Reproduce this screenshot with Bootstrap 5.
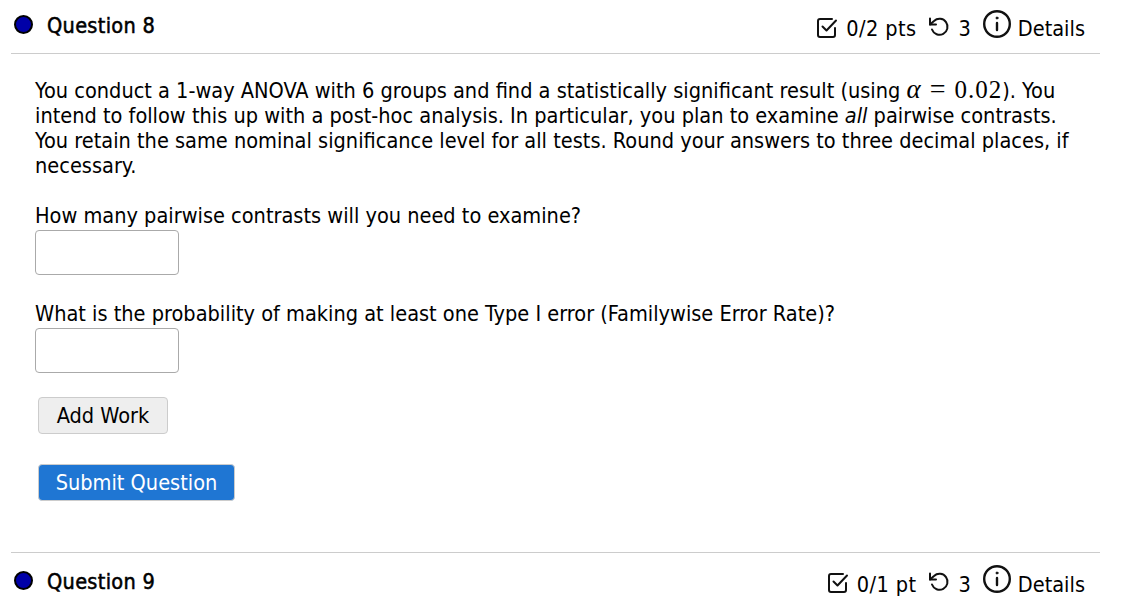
<!DOCTYPE html>
<html lang="en">
<head>
    <meta charset="UTF-8">
    <meta name="viewport" content="width=device-width, initial-scale=1.0">
    <title>Question 8</title>
    <link href="https://cdn.jsdelivr.net/npm/bootstrap@5.3.3/dist/css/bootstrap.min.css" rel="stylesheet">
    <style>
        body {
            font-family: "DejaVu Sans", sans-serif;
            font-stretch: condensed;
            font-size: 21.55px;
            line-height: 25px;
            color: #000;
            background: #fff;
            overflow: hidden;
        }
        .pagina { width: 1100px; padding-left: 11px; }
        .cabecalho { height: 54px; border-bottom: 1px solid #ccc; }
        .cabecalho-fim { height: 54px; margin-top: 2px; }
        .bolinha {
            width: 19px; height: 19px; border-radius: 50%;
            background: #0000a8; border: 2px solid #000;
            margin-left: 3px; margin-right: 14px;
        }
        .titulo-questao { -webkit-text-stroke: 0.5px #000; letter-spacing: 0.3px; padding-top: 2px; }
        .cabecalho-esq { height: 100%; padding-bottom: 4px; }
        .info-questao { padding-right: 15px; height: 100%; }
        .texto-info { padding-top: 4px; margin-left: 8px; }
        .texto-pontos { letter-spacing: 0.4px; }
        .icone-info { margin-top: 2px; margin-left: 12px; }
        .icone-detalhes { margin-bottom: 6px; margin-left: 11px; margin-right: -2px; }
        .corpo { padding: 24px 24px 0; width: 1089px; }
        .corpo p { margin: 0 0 25px; }
        .caixa-resposta {
            display: block; width: 144px; height: 45px; margin-top: 2px;
            border: 1px solid #aaa; border-radius: 4px; background: #fff;
        }
        .bloco-pergunta { margin-bottom: 26px; }
        .bloco-pergunta + .botao-add { margin-top: -2px; }
        .botao-add, .botao-enviar {
            font-size: 21.55px; font-stretch: condensed; line-height: 25px; border-radius: 4px; padding: 0;
            margin-left: 3px; display: block;
        }
        .botao-add { width: 130px; height: 37px; background: #eee; border: 1px solid #ccc; color: #000; }
        .botao-enviar { width: 197px; height: 37px; background: #1f76d3; border: 1px solid #ccc; color: #fff; margin-top: 30px; }
        .formula { font-family: "Liberation Serif", serif; font-size: 25px; line-height: 0; font-stretch: normal; }
        .formula i { font-size: 27px; margin-right: 9px; }
        .formula b { font-weight: 400; font-size: 28px; margin-right: 9px; }
        .formula span { letter-spacing: 1px; }
        .divisor { border-top: 1px solid #ccc; margin-top: 51px; }
    </style>
</head>
<body>
    <div class="pagina">
        <div class="cabecalho d-flex justify-content-between align-items-center">
            <div class="cabecalho-esq d-flex align-items-center">
                <span class="bolinha"></span>
                <span class="titulo-questao">Question 8</span>
            </div>
            <div class="info-questao d-flex align-items-center">
                <svg class="icone-info" width="22" height="22" viewBox="0 0 22 22" fill="none" stroke="#111" stroke-width="2" stroke-linecap="round" stroke-linejoin="round"><path d="M19 11v7a2 2 0 0 1-2 2H4a2 2 0 0 1-2-2V4a2 2 0 0 1 2-2h12"/><path d="M6.5 9.5l4 4 9.5-10"/></svg>
                <span class="texto-info texto-pontos">0/2 pts</span>
                <svg class="icone-info" width="22" height="22" viewBox="0 0 22 22" fill="none" stroke="#111" stroke-width="2" stroke-linecap="round" stroke-linejoin="round"><path d="M4 12.5a8 8 0 1 0 2-8.5L2 7.5"/><path d="M2 1.5v6h6"/></svg>
                <span class="texto-info">3</span>
                <svg class="icone-detalhes" width="30" height="30" viewBox="0 0 30 30" fill="none" stroke="#111" stroke-width="2.4" stroke-linecap="round"><circle cx="15" cy="15" r="12.8"/><path d="M15 14v7"/><circle cx="15" cy="9" r="1" fill="#111" stroke-width="1"/></svg>
                <span class="texto-info">Details</span>
            </div>
        </div>
        <div class="corpo">
            <p>You conduct a 1-way ANOVA with 6 groups and find a statistically significant result (using <span class="formula"><i>α</i><b>=</b><span>0.02</span></span>). You intend to follow this up with a post-hoc analysis. In particular, you plan to examine <i>all</i> pairwise contrasts. You retain the same nominal significance level for all tests. Round your answers to three decimal places, if necessary.</p>
            <div class="bloco-pergunta">
                <div>How many pairwise contrasts will you need to examine?</div>
                <input type="text" class="caixa-resposta" aria-label="Contrasts">
            </div>
            <div class="bloco-pergunta">
                <div>What is the probability of making at least one Type I error (Familywise Error Rate)?</div>
                <input type="text" class="caixa-resposta" aria-label="Familywise error rate">
            </div>
            <button type="button" class="btn botao-add">Add Work</button>
            <button type="button" class="btn botao-enviar">Submit Question</button>
        </div>
        <div class="divisor"></div>
        <div class="cabecalho-fim d-flex justify-content-between align-items-center">
            <div class="cabecalho-esq d-flex align-items-center">
                <span class="bolinha"></span>
                <span class="titulo-questao">Question 9</span>
            </div>
            <div class="info-questao d-flex align-items-center">
                <svg class="icone-info" width="22" height="22" viewBox="0 0 22 22" fill="none" stroke="#111" stroke-width="2" stroke-linecap="round" stroke-linejoin="round"><path d="M19 11v7a2 2 0 0 1-2 2H4a2 2 0 0 1-2-2V4a2 2 0 0 1 2-2h12"/><path d="M6.5 9.5l4 4 9.5-10"/></svg>
                <span class="texto-info texto-pontos">0/1 pt</span>
                <svg class="icone-info" width="22" height="22" viewBox="0 0 22 22" fill="none" stroke="#111" stroke-width="2" stroke-linecap="round" stroke-linejoin="round"><path d="M4 12.5a8 8 0 1 0 2-8.5L2 7.5"/><path d="M2 1.5v6h6"/></svg>
                <span class="texto-info">3</span>
                <svg class="icone-detalhes" width="30" height="30" viewBox="0 0 30 30" fill="none" stroke="#111" stroke-width="2.4" stroke-linecap="round"><circle cx="15" cy="15" r="12.8"/><path d="M15 14v7"/><circle cx="15" cy="9" r="1" fill="#111" stroke-width="1"/></svg>
                <span class="texto-info">Details</span>
            </div>
        </div>
    </div>
    <script src="https://cdn.jsdelivr.net/npm/bootstrap@5.3.3/dist/js/bootstrap.bundle.min.js"></script>
</body>
</html>
